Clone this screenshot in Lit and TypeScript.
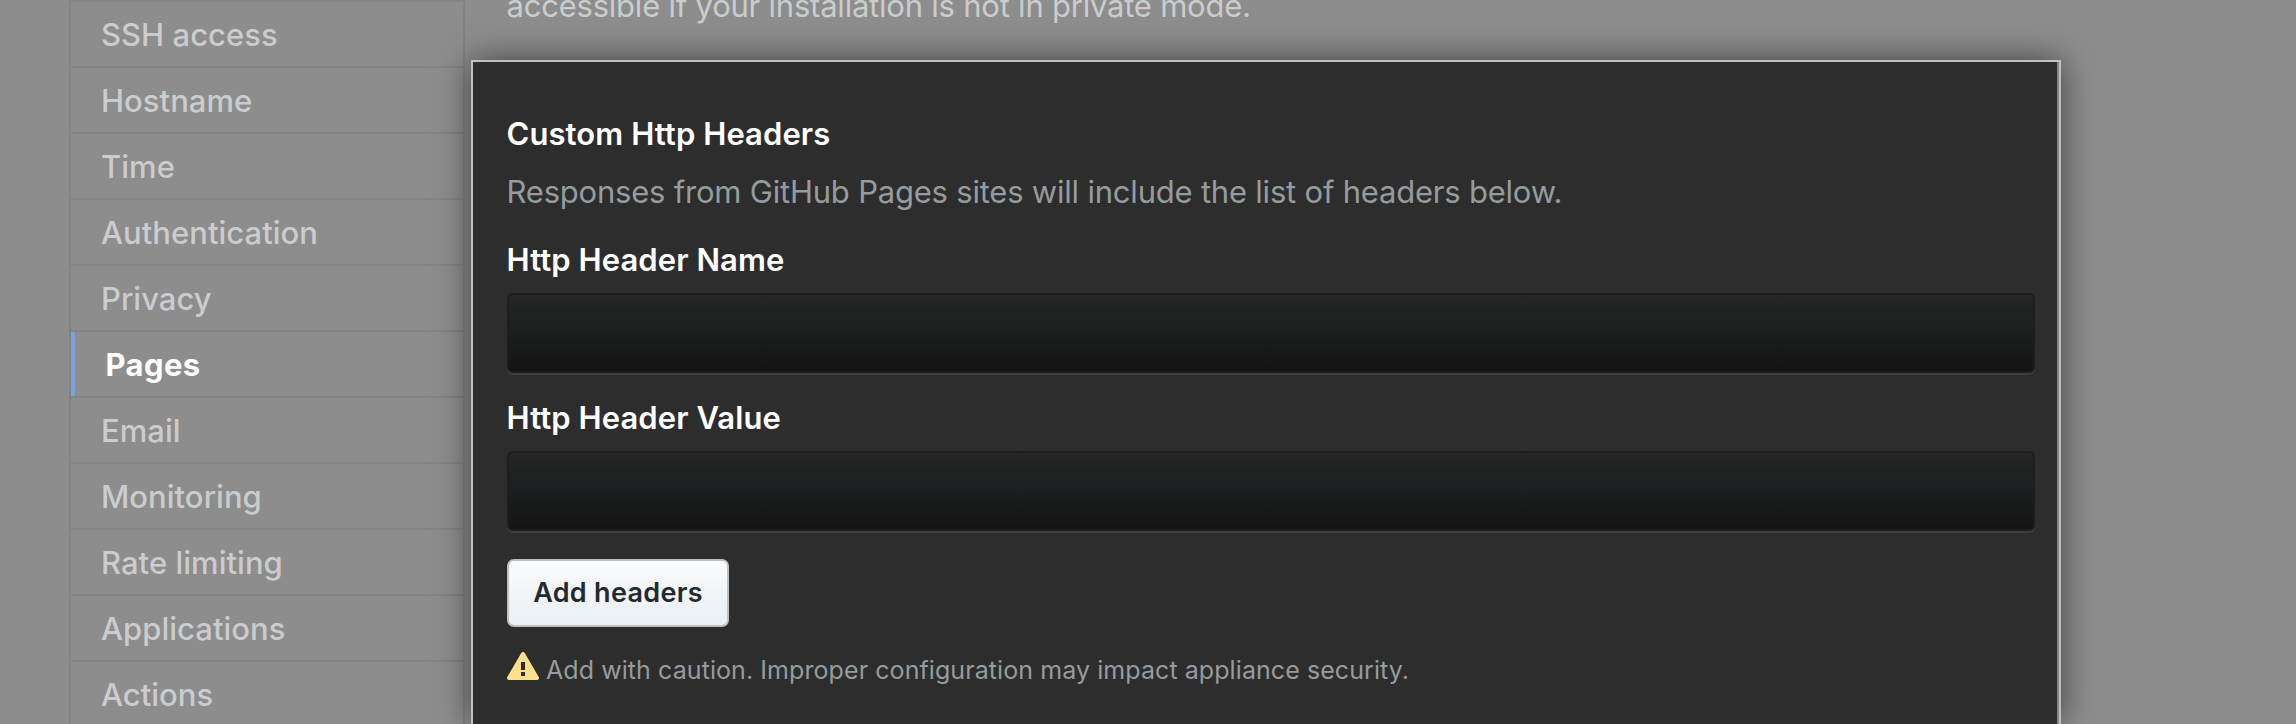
import { LitElement, html, css } from "lit";
import { customElement } from "lit/decorators.js";
import { classMap } from "lit/directives/class-map.js";

const NAV = [
  "SSH access",
  "Hostname",
  "Time",
  "Authentication",
  "Privacy",
  "Pages",
  "Email",
  "Monitoring",
  "Rate limiting",
  "Applications",
  "Actions",
];

@customElement("settings-nav")
class SettingsNav extends LitElement {
  static styles = css`
    :host {
      display: block;
      box-sizing: border-box;
      width: 396px;
      flex: none;
      border: 2px solid #838383;
      border-bottom: 0;
    }
    .item {
      display: block;
      box-sizing: border-box;
      height: 66px;
      padding: 1px 0 0 30px;
      border-bottom: 2px solid #838383;
      line-height: 64px;
      font-weight: 540;
      letter-spacing: 0.03px;
      color: #cacccd;
      text-decoration: none;
      white-space: nowrap;
    }
    .item.selected {
      background: linear-gradient(#76a5e1, #76a5e1) left / 4px 100% no-repeat;
      padding-left: 34.5px;
      font-weight: 700;
      letter-spacing: 0.4px;
      color: #fff;
    }
  `;

  render() {
    return html`<nav>
      ${NAV.map(
        (label) =>
          html`<a class=${classMap({ item: true, selected: label === "Pages" })}>${label}</a>`
      )}
    </nav>`;
  }
}

@customElement("headers-panel")
class HeadersPanel extends LitElement {
  static styles = css`
    :host {
      display: block;
      box-sizing: border-box;
      width: 1590px;
      height: 664px;
      padding: 52px 22px 0 34px;
      border: 2px solid #bfc1c1;
      border-bottom: 0;
      background: #2d2d2d;
      box-shadow: inset -2px 0 0 #858585, 0 0 32px rgba(0, 0, 0, 0.55);
    }
    h2,
    label,
    p {
      display: block;
      margin: 0 0 0 -0.5px;
      line-height: 40px;
      white-space: nowrap;
    }
    h2,
    label {
      font-size: 31px;
      font-weight: 600;
      letter-spacing: 0.08px;
      color: #fff;
    }
    .lead {
      margin-top: 18px;
      letter-spacing: -0.21px;
      color: #959c9f;
    }
    label {
      margin-top: 28px;
    }
    .field {
      display: block;
      box-sizing: border-box;
      width: 1528px;
      height: 80px;
      margin: 13px 0 0;
      padding: 0 16px;
      border: 2px solid #1c1e1d;
      border-radius: 6px;
      outline: 0;
      background: linear-gradient(#252726, #1c1e1f 50%, #131413);
      box-shadow: 0 2px 0 #3e3f3e;
      color: #fff;
      font: inherit;
    }
    .field + label {
      margin-top: 25px;
    }
    .add {
      display: block;
      box-sizing: border-box;
      width: 222px;
      height: 68px;
      margin: 28px 0 0;
      padding: 0;
      border: 2px solid #bfc0c1;
      border-radius: 7px;
      background: linear-gradient(#fafbfc, #ebf0f4 90%);
      color: #24292e;
      font: 600 27px/62px Inter, sans-serif;
      letter-spacing: 0.3px;
      white-space: nowrap;
    }
    .note {
      display: flex;
      margin: 23px 0 0;
      font-size: 25px;
      letter-spacing: 0.075px;
      color: #959c9f;
    }
    .note svg {
      flex: none;
      width: 32px;
      height: 32px;
      margin: 0 7px 0 0;
    }
  `;

  render() {
    return html`
      <h2>Custom Http Headers</h2>
      <p class="lead">Responses from GitHub Pages sites will include the list of headers below.</p>
      <label for="name">Http Header Name</label>
      <input class="field" id="name" />
      <label for="value">Http Header Value</label>
      <input class="field" id="value" />
      <button class="add">Add headers</button>
      <p class="note">
        <svg viewBox="0 0 16 16" fill="#fae08c">
          <path
            fill-rule="evenodd"
            d="M8.893 1.5c-.183-.31-.52-.5-.887-.5s-.703.19-.886.5L.138 13.499a.98.98 0 0 0 0 1.001c.193.31.53.501.886.501h13.964c.367 0 .704-.19.877-.5a1.03 1.03 0 0 0 .01-1.002L8.893 1.5zm.133 11.497H6.987v-2.003h2.039v2.003zm0-3.004H6.987V5.987h2.039v4.006z"
          />
        </svg>
        <span>Add with caution. Improper configuration may impact appliance security.</span>
      </p>
    `;
  }
}

@customElement("app-root")
class AppRoot extends LitElement {
  static styles = css`
    :host {
      display: flex;
      box-sizing: border-box;
      gap: 6px;
      height: 724px;
      padding-left: 69px;
      overflow: hidden;
      background: #8d8d8d;
      font: 400 31px/40px Inter, sans-serif;
    }
    main {
      display: flow-root;
      z-index: 1;
    }
    .intro {
      margin: -14px 0 34px 35.5px;
      letter-spacing: -0.22px;
      color: #cacccd;
      white-space: nowrap;
    }
  `;

  render() {
    return html`
      <settings-nav></settings-nav>
      <main>
        <p class="intro">accessible if your installation is not in private mode.</p>
        <headers-panel></headers-panel>
      </main>
    `;
  }
}
